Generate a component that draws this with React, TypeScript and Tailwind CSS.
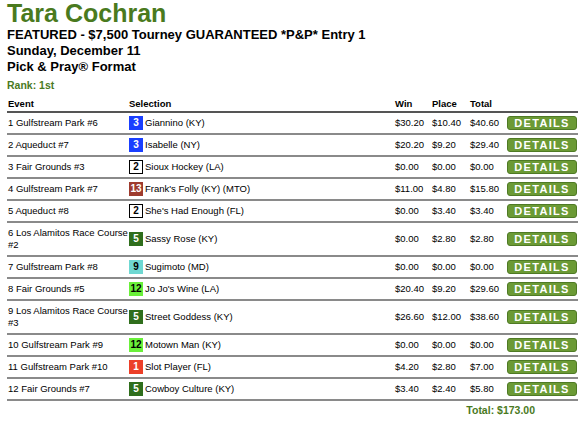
import React from "react";

type Row = {
  event: string;
  num: string;
  badge: string;
  sel: string;
  win: string;
  place: string;
  total: string;
};

const rows: Row[] = [
  { event: "1 Gulfstream Park #6", num: "3", badge: "bg-[#1a3fff] text-white", sel: "Giannino (KY)", win: "$30.20", place: "$10.40", total: "$40.60" },
  { event: "2 Aqueduct #7", num: "3", badge: "bg-[#1a3fff] text-white", sel: "Isabelle (NY)", win: "$20.20", place: "$9.20", total: "$29.40" },
  { event: "3 Fair Grounds #3", num: "2", badge: "bg-white text-black border border-black", sel: "Sioux Hockey (LA)", win: "$0.00", place: "$0.00", total: "$0.00" },
  { event: "4 Gulfstream Park #7", num: "13", badge: "bg-[#9e3b2e] text-white", sel: "Frank's Folly (KY) (MTO)", win: "$11.00", place: "$4.80", total: "$15.80" },
  { event: "5 Aqueduct #8", num: "2", badge: "bg-white text-black border border-black", sel: "She's Had Enough (FL)", win: "$0.00", place: "$3.40", total: "$3.40" },
  { event: "6 Los Alamitos Race Course #2", num: "5", badge: "bg-[#2f6e1c] text-white", sel: "Sassy Rose (KY)", win: "$0.00", place: "$2.80", total: "$2.80" },
  { event: "7 Gulfstream Park #8", num: "9", badge: "bg-[#6fd8d2] text-black", sel: "Sugimoto (MD)", win: "$0.00", place: "$0.00", total: "$0.00" },
  { event: "8 Fair Grounds #5", num: "12", badge: "bg-[#6af03a] text-black", sel: "Jo Jo's Wine (LA)", win: "$20.40", place: "$9.20", total: "$29.60" },
  { event: "9 Los Alamitos Race Course #3", num: "5", badge: "bg-[#2f6e1c] text-white", sel: "Street Goddess (KY)", win: "$26.60", place: "$12.00", total: "$38.60" },
  { event: "10 Gulfstream Park #9", num: "12", badge: "bg-[#6af03a] text-black", sel: "Motown Man (KY)", win: "$0.00", place: "$0.00", total: "$0.00" },
  { event: "11 Gulfstream Park #10", num: "1", badge: "bg-[#ec3f28] text-white", sel: "Slot Player (FL)", win: "$4.20", place: "$2.80", total: "$7.00" },
  { event: "12 Fair Grounds #7", num: "5", badge: "bg-[#2f6e1c] text-white", sel: "Cowboy Culture (KY)", win: "$3.40", place: "$2.40", total: "$5.80" },
];

export default function App() {
  return (
    <div
      className="w-[583px] h-[421px] overflow-hidden bg-white text-black"
      style={{ fontFamily: '"Liberation Sans", Arial, sans-serif' }}
    >
      <div className="pl-[7px]">
        <h1 className="text-[25px] leading-[26px] font-bold text-[#4a7a1e]">Tara Cochran</h1>
        <div className="mt-[1px] text-[13px] leading-[16px] font-bold">
          <div>FEATURED - $7,500 Tourney GUARANTEED *P&amp;P* Entry 1</div>
          <div>Sunday, December 11</div>
          <div>Pick &amp; Pray® Format</div>
        </div>
        <div className="mt-[4px] text-[10.5px] leading-[13px] font-bold text-[#4a7a1e]">Rank: 1st</div>
        <table className="mt-[6px] w-[571px] table-fixed border-collapse text-[9.5px] leading-[12px]">
          <colgroup>
            <col className="w-[122px]" />
            <col className="w-[264px]" />
            <col className="w-[38px]" />
            <col className="w-[38px]" />
            <col className="w-[37px]" />
            <col className="w-[72px]" />
          </colgroup>
          <thead>
            <tr className="border-b-2 border-[#555] text-left">
              <th className="pl-[1px] pb-[1px] font-bold">Event</th>
              <th className="pb-[1px] font-bold">Selection</th>
              <th className="pl-[2px] pb-[1px] font-bold">Win</th>
              <th className="pl-[1px] pb-[1px] font-bold">Place</th>
              <th className="pl-[1px] pb-[1px] font-bold">Total</th>
              <th className="pb-[1px]"></th>
            </tr>
          </thead>
          <tbody>
            {rows.map((r, i) => (
              <tr key={i} className="border-b-2 border-[#8a8a8a]">
                <td className="pl-[1px] py-[4px] align-middle">{r.event}</td>
                <td className="py-[3px] align-middle">
                  <div className="flex items-center">
                    <span
                      className={`inline-flex items-center justify-center min-w-[14px] h-[14px] px-[1px] mr-[2px] text-[10px] font-bold leading-none box-border ${r.badge}`}
                    >
                      {r.num}
                    </span>
                    <span>{r.sel}</span>
                  </div>
                </td>
                <td className="pl-[2px] py-[4px] align-middle">{r.win}</td>
                <td className="pl-[1px] py-[4px] align-middle">{r.place}</td>
                <td className="pl-[1px] py-[4px] align-middle">{r.total}</td>
                <td className="pl-[1px] py-[3px] align-middle">
                  <div className="flex h-[14px] w-[70px] items-center justify-center rounded-[3px] border border-[#4f7a25] bg-[#6b9a35] text-[11px] font-bold tracking-[1.3px] text-white leading-none">
                    DETAILS
                  </div>
                </td>
              </tr>
            ))}
          </tbody>
        </table>
        <div className="flex w-[571px] justify-end pr-[43px] pt-[3px] text-[10.5px] leading-[13px] font-bold text-[#4a7a1e]">
          Total: $173.00
        </div>
      </div>
    </div>
  );
}
